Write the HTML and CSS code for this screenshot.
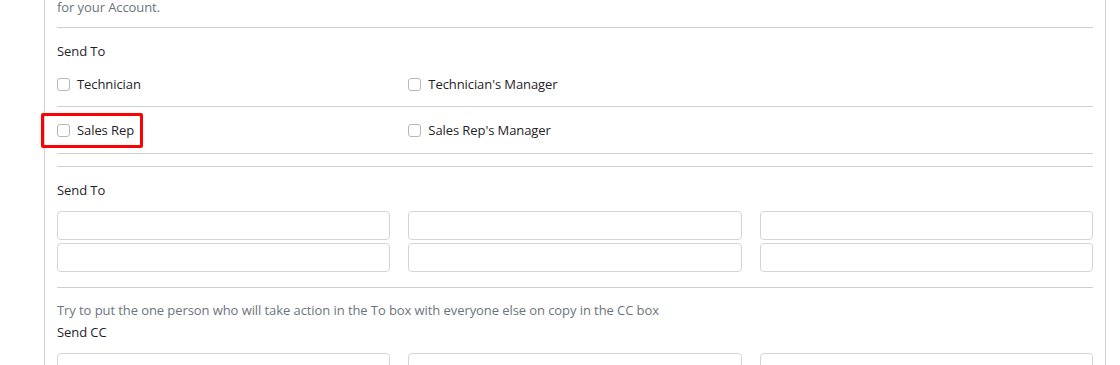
FILE: index.html
```html
<!DOCTYPE html>
<html lang="en">
<head>
<meta charset="utf-8">
<title>Notification Recipients</title>
<link rel="stylesheet" href="styles.css">
</head>
<body>
<div class="panel">
  <section class="section section-checks">
    <p class="note">for your Account.</p>
    <div class="label">Send To</div>
    <div class="check-row">
      <label class="check"><input type="checkbox" class="check-box"><span>Technician</span></label>
      <label class="check"><input type="checkbox" class="check-box"><span>Technician's Manager</span></label>
    </div>
    <div class="check-row check-row-last">
      <label class="check check-highlight"><input type="checkbox" class="check-box"><span>Sales Rep</span></label>
      <label class="check"><input type="checkbox" class="check-box"><span>Sales Rep's Manager</span></label>
    </div>
  </section>
  <section class="section section-inputs">
    <div class="label">Send To</div>
    <div class="input-grid">
      <input class="field" type="text">
      <input class="field" type="text">
      <input class="field" type="text">
      <input class="field" type="text">
      <input class="field" type="text">
      <input class="field" type="text">
    </div>
  </section>
  <section class="section section-cc">
    <div class="help">Try to put the one person who will take action in the To box with everyone else on copy in the CC box</div>
    <div class="label">Send CC</div>
    <div class="input-grid">
      <input class="field" type="text">
      <input class="field" type="text">
      <input class="field" type="text">
    </div>
  </section>
</div>
</body>
</html>
```
FILE: styles.css
```css
html, body {
  margin: 0;
  padding: 0;
  background: #fff;
}
body {
  font-family: "Open Sans", "Noto Sans", sans-serif;
  font-size: 13px;
  letter-spacing: -0.08px;
  line-height: 21px;
  color: #1f2328;
  height: 365px;
  overflow: hidden;
}
.panel {
  margin-left: 44px;
  width: 1036px;
  padding: 0 12px;
  border-left: 1px solid #cfcfcf;
  border-right: 1px solid #cfcfcf;
}
.section {
  border-bottom: 1px solid #cfcfcf;
}
.note {
  margin: 0;
  line-height: 14px;
  padding-bottom: 13px;
  color: #6c757d;
  border-bottom: 1px solid #cfcfcf;
}
.section-checks {
  padding-bottom: 12px;
}
.section-checks .label {
  padding-top: 13px;
}
.check-row {
  display: grid;
  grid-template-columns: repeat(3, 1fr);
  column-gap: 18px;
  padding: 12px 0 11px;
  border-bottom: 1px solid #cfcfcf;
}
.check-row-last {
  padding-top: 13px;
  padding-bottom: 12px;
}
.check {
  display: flex;
  align-items: center;
  position: relative;
  width: max-content;
}
.check-box {
  appearance: none;
  -webkit-appearance: none;
  width: 13px;
  height: 13px;
  margin: 0 7px 0 0;
  border: 1px solid #b8b8b8;
  border-radius: 3px;
  background: #fff;
}
.check-highlight::after {
  content: "";
  position: absolute;
  left: -16px;
  top: -7px;
  width: 96px;
  height: 29px;
  border: 3px solid #ff0000;
  border-radius: 2px;
}
.section-inputs {
  padding: 13px 0 15px;
}
.section-inputs .input-grid {
  margin-top: 10px;
}
.section-cc {
  padding-top: 12px;
  border-bottom: none;
}
.section-cc .label {
  padding-top: 1px;
}
.input-grid {
  display: grid;
  grid-template-columns: repeat(3, 1fr);
  column-gap: 18px;
  row-gap: 3px;
  margin-top: 10px;
}
.field {
  box-sizing: border-box;
  height: 29px;
  width: 100%;
  margin: 0;
  border: 1px solid #d2d5d9;
  border-radius: 4px;
  background: #fff;
  font: inherit;
}
.help {
  color: #6c757d;
}
```
